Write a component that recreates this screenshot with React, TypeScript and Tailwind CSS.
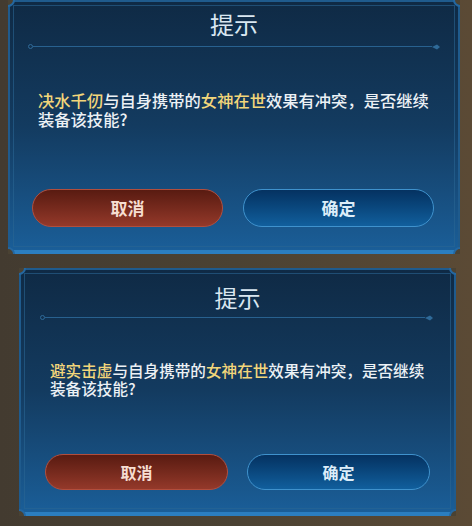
import type { ReactNode } from 'react';

const FONT = { fontFamily: '"Noto Sans CJK SC", "Noto Sans", sans-serif' };

type Size = 'lg' | 'sm';

// Concave notch cut into each corner of the frame (the wrapper clips the outer 3/4)
function Notches() {
    const base = 'absolute w-[14px] h-[14px] rounded-full bg-[#4a4233] border-2 border-[#2467a0]';
    return (
        <>
            <div className={`${base} -top-[7px] -left-[7px]`} />
            <div className={`${base} -top-[7px] -right-[7px]`} />
            <div className={`${base} -bottom-[7px] -left-[7px] border-[#2b7ec0]`} />
            <div className={`${base} -bottom-[7px] -right-[7px] border-[#2b7ec0]`} />
        </>
    );
}

function Divider({ size }: { size: Size }) {
    return (
        <div className={size === 'lg' ? 'flex items-center mx-[18px] mt-[8px] h-px' : 'flex items-center ml-[19px] mr-[21px] mt-[7px] h-px'}>
            <div className="w-[5px] h-[5px] rounded-full border border-[#2f6a98] shrink-0" />
            <div className="flex-1 h-px bg-[#28618f]" />
            <svg width="8" height="6" viewBox="0 0 8 6" className="shrink-0">
                <path d="M0 3 L5 0.5 L8 3 L5 5.5 Z" fill="#2f6a98" />
            </svg>
        </div>
    );
}

function Hl({ children }: { children: ReactNode }) {
    return <span className="text-[#f2d67a]">{children}</span>;
}

function SkillDialog({ size, skill }: { size: Size; skill: string }) {
    const lg = size === 'lg';
    return (
        <div
            className={
                lg
                    ? 'relative overflow-hidden ml-[8px] w-[452px] h-[254px] shrink-0'
                    : 'relative overflow-hidden ml-[19px] w-[437px] h-[248px] shrink-0'
            }
        >
            <div className="relative h-full border-x-2 border-t-2 border-b-[4px] border-[#1f5b8d] border-b-[#2b7ec0] bg-gradient-to-b from-[#0f2a45] via-[#133b60] to-[#1a5e98]">
                {/* inner trim line */}
                <div className="absolute inset-[3px] border border-[#2a6593]/60 pointer-events-none" />

                <div className="relative flex flex-col">
                    <div
                        className={
                            lg
                                ? 'mt-[8px] h-[28px] text-center text-[24px] leading-[28px] text-[#d9e7f1]'
                                : 'mt-[14px] h-[26px] text-center text-[23px] leading-[26px] text-[#d9e7f1]'
                        }
                    >
                        提示
                    </div>
                    <Divider size={size} />

                    <div
                        className={
                            lg
                                ? 'mt-[44px] pl-[28px] pr-[20px] text-[16.3px] leading-[19px] font-medium text-[#ecf1f5]'
                                : 'mt-[43px] pl-[29px] pr-[20px] text-[15.6px] leading-[18px] font-medium text-[#ecf1f5]'
                        }
                    >
                        <div>
                            <Hl>{skill}</Hl>与自身携带的<Hl>女神在世</Hl>效果有冲突，是否继续
                        </div>
                        <div>装备该技能?</div>
                    </div>

                    <div
                        className={
                            lg
                                ? 'mt-[60px] flex gap-[20px] pl-[22px] h-[38px]'
                                : 'mt-[57px] flex gap-[19px] pl-[24px] h-[36px]'
                        }
                    >
                        <button
                            className={
                                lg
                                    ? 'w-[191px] h-full rounded-full border border-[#b24e3d] bg-gradient-to-b from-[#591b11] to-[#94392a] text-[17px] font-bold text-[#f6ddd1]'
                                    : 'w-[183px] h-full rounded-full border border-[#b24e3d] bg-gradient-to-b from-[#591b11] to-[#94392a] text-[16px] font-bold text-[#f6ddd1]'
                            }
                        >
                            取消
                        </button>
                        <button
                            className={
                                lg
                                    ? 'w-[191px] h-full rounded-full border border-[#3f92cd] bg-gradient-to-b from-[#053261] to-[#115f9d] text-[17px] font-bold text-[#dcedf9]'
                                    : 'w-[183px] h-full rounded-full border border-[#3f92cd] bg-gradient-to-b from-[#053261] to-[#115f9d] text-[16px] font-bold text-[#dcedf9]'
                            }
                        >
                            确定
                        </button>
                    </div>
                </div>
            </div>
            <Notches />
        </div>
    );
}

export default function App() {
    return (
        <div
            className="w-[472px] h-[526px] overflow-hidden flex flex-col bg-gradient-to-r from-[#433b30] via-[#4b4233] to-[#5b4a35]"
            style={FONT}
        >
            <SkillDialog size="lg" skill="决水千仞" />
            <div className="h-[14px] shrink-0" />
            <SkillDialog size="sm" skill="避实击虚" />
        </div>
    );
}
